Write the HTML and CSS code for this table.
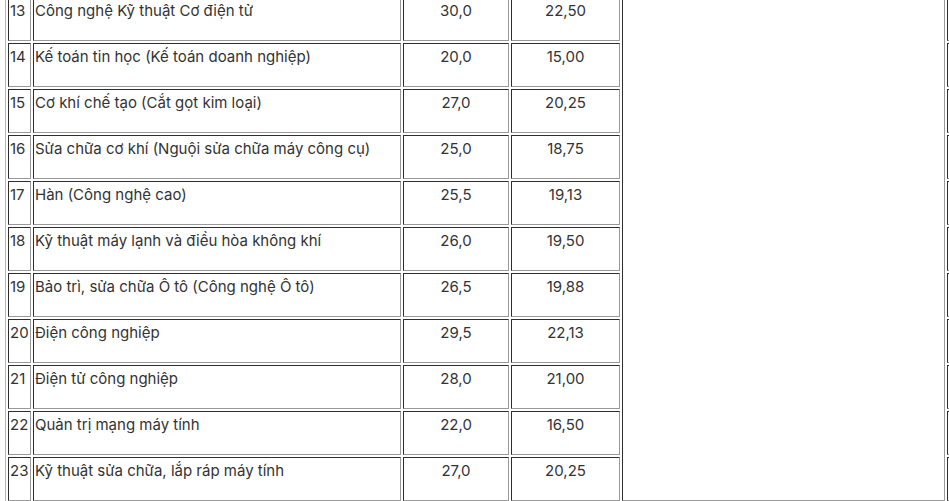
FILE: index.html
```html
<!DOCTYPE html>
<html lang="vi">
<head>
<meta charset="utf-8">
<title>Điểm chuẩn</title>
<link rel="stylesheet" href="styles.css">
</head>
<body>
<div class="frame">
<table class="scores">
<tbody>
<tr>
<td><div class="c c1">13</div></td>
<td><div class="c c2">Công nghệ Kỹ thuật Cơ điện tử</div></td>
<td><div class="c c3">30,0</div></td>
<td><div class="c c4">22,50</div></td>
<td rowspan="11" class="big"><div class="c5"></div></td>
<td><div class="c c6"></div></td>
</tr>
<tr>
<td><div class="c c1">14</div></td>
<td><div class="c c2">Kế toán tin học (Kế toán doanh nghiệp)</div></td>
<td><div class="c c3">20,0</div></td>
<td><div class="c c4">15,00</div></td>
<td><div class="c c6"></div></td>
</tr>
<tr>
<td><div class="c c1">15</div></td>
<td><div class="c c2">Cơ khí chế tạo (Cắt gọt kim loại)</div></td>
<td><div class="c c3">27,0</div></td>
<td><div class="c c4">20,25</div></td>
<td><div class="c c6"></div></td>
</tr>
<tr>
<td><div class="c c1">16</div></td>
<td><div class="c c2">Sửa chữa cơ khí (Nguội sửa chữa máy công cụ)</div></td>
<td><div class="c c3">25,0</div></td>
<td><div class="c c4">18,75</div></td>
<td><div class="c c6"></div></td>
</tr>
<tr>
<td><div class="c c1">17</div></td>
<td><div class="c c2">Hàn (Công nghệ cao)</div></td>
<td><div class="c c3">25,5</div></td>
<td><div class="c c4">19,13</div></td>
<td><div class="c c6"></div></td>
</tr>
<tr>
<td><div class="c c1">18</div></td>
<td><div class="c c2">Kỹ thuật máy lạnh và điều hòa không khí</div></td>
<td><div class="c c3">26,0</div></td>
<td><div class="c c4">19,50</div></td>
<td><div class="c c6"></div></td>
</tr>
<tr>
<td><div class="c c1">19</div></td>
<td><div class="c c2">Bảo trì, sửa chữa Ô tô (Công nghệ Ô tô)</div></td>
<td><div class="c c3">26,5</div></td>
<td><div class="c c4">19,88</div></td>
<td><div class="c c6"></div></td>
</tr>
<tr>
<td><div class="c c1">20</div></td>
<td><div class="c c2">Điện công nghiệp</div></td>
<td><div class="c c3">29,5</div></td>
<td><div class="c c4">22,13</div></td>
<td><div class="c c6"></div></td>
</tr>
<tr>
<td><div class="c c1">21</div></td>
<td><div class="c c2">Điện tử công nghiệp</div></td>
<td><div class="c c3">28,0</div></td>
<td><div class="c c4">21,00</div></td>
<td><div class="c c6"></div></td>
</tr>
<tr>
<td><div class="c c1">22</div></td>
<td><div class="c c2">Quản trị mạng máy tính</div></td>
<td><div class="c c3">22,0</div></td>
<td><div class="c c4">16,50</div></td>
<td><div class="c c6"></div></td>
</tr>
<tr>
<td><div class="c c1">23</div></td>
<td><div class="c c2">Kỹ thuật sửa chữa, lắp ráp máy tính</div></td>
<td><div class="c c3">27,0</div></td>
<td><div class="c c4">20,25</div></td>
<td><div class="c c6"></div></td>
</tr>
</tbody>
</table>
</div>
</body>
</html>
```

FILE: styles.css
```css
html, body {
  margin: 0;
  padding: 0;
  overflow: hidden;
  background: #ffffff;
}

body {
  font-family: Inter, "Noto Sans", "Liberation Sans", sans-serif;
  font-size: 15px;
  color: #333333;
}

.frame {
  width: 949px;
  height: 501px;
  overflow: hidden;
}

.scores {
  margin: -6px 0 0 5px;
  border-collapse: separate;
  border-spacing: 2px;
  border-style: solid;
  border-width: 1px;
  border-color: #b5b5b5 #555555 #555555 #b5b5b5;
}

.scores td {
  padding: 0;
  vertical-align: top;
  border-style: solid;
  border-width: 1px;
  border-color: #2e2e2e #9a9a9a #9a9a9a #2e2e2e;
}

.c {
  box-sizing: border-box;
  height: 42px;
  padding: 2px 2px 0 2px;
  line-height: 22px;
  white-space: nowrap;
  overflow: hidden;
}

.c1 { width: 21px; padding-left: 1px; padding-right: 0; }
.c2 { width: 366px; padding-left: 1px; }
.c3 { width: 104px; text-align: center; }
.c4 { width: 107px; text-align: center; }
.c5 { width: 321px; }
.c6 { width: 100px; }
```
